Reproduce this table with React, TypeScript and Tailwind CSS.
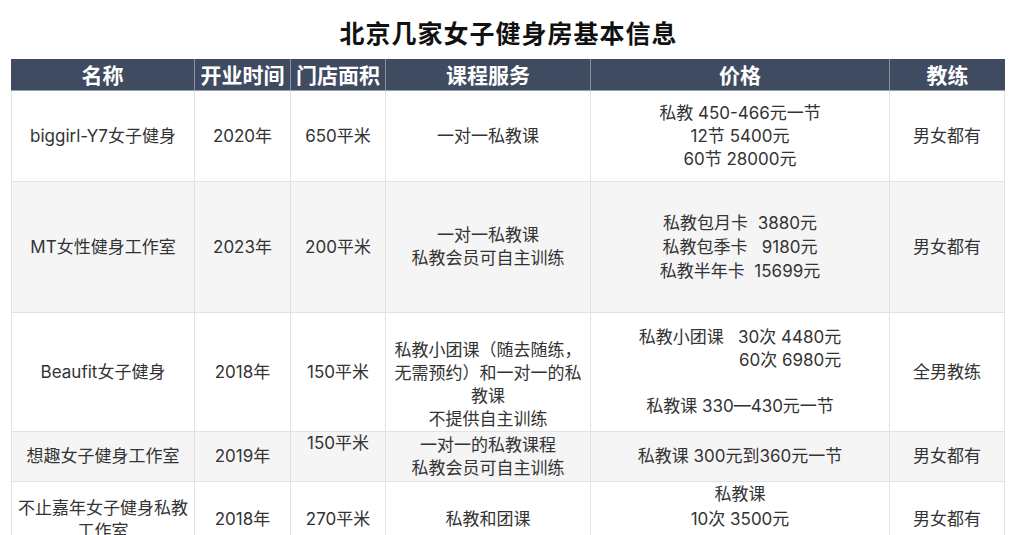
import React from "react";

const cols = "grid grid-cols-[184px_96px_95px_205px_299px_115px]";
const cell = "border-r border-b border-[#e2e2e2] flex flex-col items-center text-center";

function L({ children }: { children: React.ReactNode }) {
  return <div className="whitespace-pre">{children}</div>;
}

export default function App() {
  return (
    <div
      className="w-[1024px] h-[535px] overflow-hidden bg-white text-[#333333] text-[17px] leading-[23px]"
      style={{ fontFamily: 'Inter, "Noto Sans CJK SC", sans-serif' }}
    >
      <div className="h-[59px] flex items-center justify-center pt-[6px]">
        <h1
          className="text-[25px] font-bold text-[#111111] tracking-[1px] pr-[7px]"
          style={{ fontFamily: '"Noto Sans CJK SC", sans-serif' }}
        >
          北京几家女子健身房基本信息
        </h1>
      </div>
      <div className="ml-[11px] w-[994px]">
        {/* header */}
        <div
          className={`${cols} h-[32px] bg-[#3f4b60] text-white text-[21px] font-bold border-b border-[#9aa1ad]`}
          style={{ fontFamily: '"Noto Sans CJK SC", sans-serif' }}
        >
          {["名称", "开业时间", "门店面积", "课程服务", "价格", "教练"].map((h, i) => (
            <div
              key={h}
              className={`flex items-center justify-center leading-none ${i < 5 ? "border-r border-[#8a93a3]" : ""}`}
            >
              {h}
            </div>
          ))}
        </div>

        {/* row 1 */}
        <div className={`${cols} h-[91px] bg-white`}>
          <div className={`${cell} justify-center border-l`}>biggirl-Y7女子健身</div>
          <div className={`${cell} justify-center`}>2020年</div>
          <div className={`${cell} justify-center`}>650平米</div>
          <div className={`${cell} justify-center`}>一对一私教课</div>
          <div className={`${cell} justify-center`}>
            <L>私教 450-466元一节</L>
            <L>12节 5400元</L>
            <L>60节 28000元</L>
          </div>
          <div className={`${cell} justify-center`}>男女都有</div>
        </div>

        {/* row 2 */}
        <div className={`${cols} h-[131px] bg-[#f5f5f5]`}>
          <div className={`${cell} justify-center border-l`}>MT女性健身工作室</div>
          <div className={`${cell} justify-center`}>2023年</div>
          <div className={`${cell} justify-center`}>200平米</div>
          <div className={`${cell} justify-center`}>
            <L>一对一私教课</L>
            <L>私教会员可自主训练</L>
          </div>
          <div className={`${cell} justify-center leading-[24px]`}>
            <L>私教包月卡  3880元</L>
            <L>私教包季卡   9180元</L>
            <L>私教半年卡  15699元</L>
          </div>
          <div className={`${cell} justify-center`}>男女都有</div>
        </div>

        {/* row 3 */}
        <div className={`${cols} h-[119px] bg-white`}>
          <div className={`${cell} justify-center border-l`}>Beaufit女子健身</div>
          <div className={`${cell} justify-center`}>2018年</div>
          <div className={`${cell} justify-center`}>150平米</div>
          <div className={`${cell} justify-end`}>
            <L>私教小团课（随去随练，</L>
            <L>无需预约）和一对一的私</L>
            <L>教课</L>
            <L>不提供自主训练</L>
          </div>
          <div className={`${cell} justify-center`}>
            <div className="flex flex-col items-end">
              <L>私教小团课   30次 4480元</L>
              <L>60次 6980元</L>
            </div>
            <L> </L>
            <L>私教课 330—430元一节</L>
          </div>
          <div className={`${cell} justify-center`}>全男教练</div>
        </div>

        {/* row 4 */}
        <div className={`${cols} h-[50px] bg-[#f5f5f5]`}>
          <div className={`${cell} justify-center border-l`}>想趣女子健身工作室</div>
          <div className={`${cell} justify-center`}>2019年</div>
          <div className={`${cell} justify-start`}>150平米</div>
          <div className={`${cell} justify-center`}>
            <L>一对一的私教课程</L>
            <L>私教会员可自主训练</L>
          </div>
          <div className={`${cell} justify-center`}>私教课 300元到360元一节</div>
          <div className={`${cell} justify-center`}>男女都有</div>
        </div>

        {/* row 5 */}
        <div className={`${cols} h-[73px] bg-white`}>
          <div className={`${cell} justify-center border-l`}>
            <L>不止嘉年女子健身私教</L>
            <L>工作室</L>
          </div>
          <div className={`${cell} justify-center`}>2018年</div>
          <div className={`${cell} justify-center`}>270平米</div>
          <div className={`${cell} justify-center`}>私教和团课</div>
          <div className={`${cell} justify-center leading-[25px]`}>
            <L>私教课</L>
            <L>10次 3500元</L>
            <L>20次 11000元</L>
          </div>
          <div className={`${cell} justify-center`}>男女都有</div>
        </div>
      </div>
    </div>
  );
}
